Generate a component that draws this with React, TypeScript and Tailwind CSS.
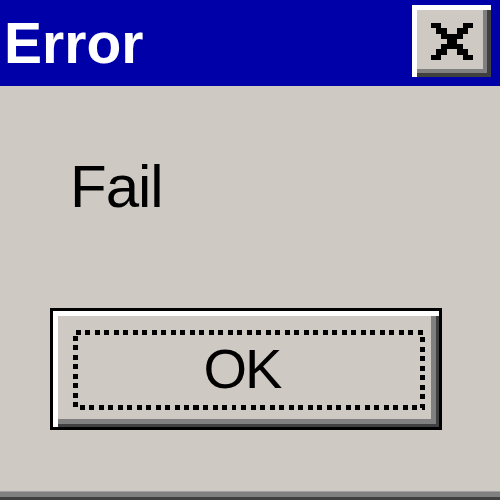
// Win9x-style "Error" message box, blown up to fill the window.

function CloseGlyph() {
  // 8x7 pixel cross, as drawn on the classic caption button
  const rows = [
    'XX....XX',
    '.XX..XX.',
    '..XXXX..',
    '...XX...',
    '..XXXX..',
    '.XX..XX.',
    'XX....XX',
  ];
  return (
    <svg width="44" height="37" viewBox="0 0 8 7" shapeRendering="crispEdges">
      {rows.map((row, y) =>
        row.split('').map((c, x) =>
          c === 'X' ? <rect key={`${x}-${y}`} x={x} y={y} width="1" height="1" fill="#000" /> : null,
        ),
      )}
    </svg>
  );
}

export default function App() {
  return (
    <div className="w-[500px] h-[500px] flex flex-col bg-[#cec9c2] overflow-hidden" style={{ fontFamily: '"Liberation Sans", Arial, sans-serif' }}>
      <div className="h-[86px] flex items-start bg-[#0000a8] shrink-0">
        <span className="pl-[4px] pt-[15px] text-[57px] leading-none font-bold text-white">Error</span>
        <button className="ml-auto mr-[9px] mt-[5px] w-[79px] h-[72px] flex items-center justify-center bg-[#cec9c2] shadow-[inset_5px_5px_#ffffff,inset_-4px_-4px_#404040,inset_-8px_-8px_#808080]">
          <CloseGlyph />
        </button>
      </div>

      <div className="flex-1 flex flex-col">
        <p className="mt-[71px] ml-[70px] text-[60px] leading-none text-black tracking-[-1px]">Fail</p>
        <div className="mt-[91px] ml-[50px] w-[392px] h-[122px] border-[3px] border-black">
          <div className="relative w-full h-full flex items-center justify-center bg-[#cec9c2] shadow-[inset_5px_5px_#ffffff,inset_-3px_-3px_#404040,inset_-8px_-8px_#808080]">
            <svg className="absolute left-[20px] top-[19px]" width="352" height="80" shapeRendering="crispEdges">
              <rect x="2.5" y="2.5" width="347" height="75" fill="none" stroke="#000" strokeWidth="5" strokeDasharray="5 4.5" />
            </svg>
            <span className="pr-[8px] text-[56px] leading-none text-black tracking-[-2px]">OK</span>
          </div>
        </div>
      </div>

      <div className="h-[1px] bg-[#a0a0a0]" />
      <div className="h-[5px] bg-[#808080]" />
      <div className="h-[3px] bg-[#404040]" />
    </div>
  );
}
